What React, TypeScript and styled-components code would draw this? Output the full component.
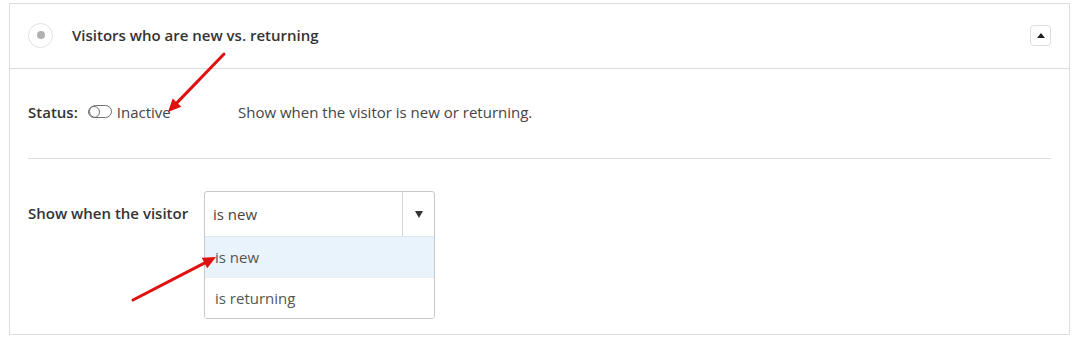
import React from 'react';
import styled, { createGlobalStyle } from 'styled-components';

const GlobalStyle = createGlobalStyle`
  html, body {
    margin: 0;
    padding: 0;
    background: #fff;
  }
  body {
    font-family: "Open Sans", "Liberation Sans", Arial, sans-serif;
    font-size: 15px;
    color: #333;
  }
`;

const Page = styled.div`
  position: relative;
  width: 1076px;
  height: 339px;
  padding: 3px 6px 0 9px;
  box-sizing: border-box;
`;

const Card = styled.section`
  border: 1px solid #dcdcdc;
  height: 332px;
  box-sizing: border-box;
  display: flex;
  flex-direction: column;
`;

const Header = styled.header`
  height: 65px;
  box-sizing: border-box;
  border-bottom: 1px solid #dcdcdc;
  display: flex;
  align-items: center;
  padding: 0 18px 2px;
`;

const Radio = styled.span`
  width: 25px;
  height: 25px;
  border: 1px solid #e2e2e2;
  border-radius: 50%;
  box-sizing: border-box;
  display: flex;
  align-items: center;
  justify-content: center;
  margin-right: 19px;
  &::after {
    content: '';
    width: 8px;
    height: 8px;
    border-radius: 50%;
    background: #b0b0b0;
  }
`;

const Title = styled.h2`
  margin: 0;
  flex: 1;
  font-size: 15px;
  font-weight: 600;
  color: #333;
`;

const CollapseButton = styled.button`
  width: 21px;
  height: 21px;
  padding: 0;
  border: 1px solid #dedede;
  border-radius: 4px;
  background: #fff;
  display: flex;
  align-items: center;
  justify-content: center;
  &::after {
    content: '';
    border-left: 4px solid transparent;
    border-right: 4px solid transparent;
    border-bottom: 5px solid #222;
  }
`;

const Body = styled.div`
  padding: 0 18px;
`;

const StatusRow = styled.div`
  height: 90px;
  box-sizing: border-box;
  display: flex;
  align-items: center;
  padding-bottom: 4px;
  border-bottom: 1px solid #dcdcdc;
`;

const StatusGroup = styled.div`
  width: 210px;
  display: flex;
  align-items: center;
`;

const Label = styled.span`
  font-weight: 600;
  color: #333;
`;

const Toggle = styled.span`
  width: 23px;
  height: 13px;
  border: 1.5px solid #707070;
  border-radius: 7px;
  box-sizing: border-box;
  margin: 0 5px 0 11px;
  display: flex;
  align-items: center;
  &::before {
    content: '';
    width: 12px;
    height: 12px;
    border: 1.5px solid #707070;
    border-radius: 50%;
    box-sizing: border-box;
    margin-left: -1.5px;
  }
`;

const StatusText = styled.span`
  color: #444;
`;

const Description = styled.span`
  color: #444;
`;

const ConditionRow = styled.div`
  display: flex;
  align-items: flex-start;
  padding-top: 32px;
`;

const ConditionLabel = styled(Label)`
  width: 176px;
  line-height: 44px;
`;

const Select = styled.div`
  width: 231px;
  box-sizing: border-box;
  border: 1px solid #c8c8c8;
  border-radius: 3px;
  background: #fff;
  color: #444;
  overflow: hidden;
`;

const SelectHead = styled.div`
  height: 44px;
  display: flex;
  align-items: center;
`;

const SelectValue = styled.span`
  flex: 1;
  padding-left: 8px;
`;

const SelectArrow = styled.span`
  width: 32px;
  height: 100%;
  box-sizing: border-box;
  border-left: 1px solid #d6d6d6;
  display: flex;
  align-items: center;
  justify-content: center;
  &::after {
    content: '';
    border-left: 4px solid transparent;
    border-right: 4px solid transparent;
    border-top: 7px solid #333;
  }
`;

const Option = styled.div<{ $active?: boolean }>`
  height: 40px;
  display: flex;
  align-items: center;
  padding-left: 10px;
  background: ${(p) => (p.$active ? '#e8f3fc' : '#fff')};
  border-top: ${(p) => (p.$active ? '1px solid #dde9f3' : '1px solid #eee')};
  color: #555;
`;

const Annotations = styled.svg`
  position: absolute;
  left: 0;
  top: 0;
  pointer-events: none;
`;

const Arrow = ({ x1, y1, x2, y2 }: { x1: number; y1: number; x2: number; y2: number }) => {
  const a = Math.atan2(y2 - y1, x2 - x1);
  const len = 13;
  const w = 6;
  const bx = x2 - Math.cos(a) * len;
  const by = y2 - Math.sin(a) * len;
  const px = -Math.sin(a) * w;
  const py = Math.cos(a) * w;
  return (
    <g>
      <line x1={x1} y1={y1} x2={bx + Math.cos(a) * 2} y2={by + Math.sin(a) * 2} stroke="#e01010" strokeWidth={3} strokeLinecap="round" />
      <polygon points={`${x2},${y2} ${bx + px},${by + py} ${bx - px},${by - py}`} fill="#e01010" />
    </g>
  );
};

export default function App() {
  return (
    <>
      <GlobalStyle />
      <Page>
        <Card>
          <Header>
            <Radio />
            <Title>Visitors who are new vs. returning</Title>
            <CollapseButton aria-label="Collapse" />
          </Header>
          <Body>
            <StatusRow>
              <StatusGroup>
                <Label>Status:</Label>
                <Toggle />
                <StatusText>Inactive</StatusText>
              </StatusGroup>
              <Description>Show when the visitor is new or returning.</Description>
            </StatusRow>
            <ConditionRow>
              <ConditionLabel>Show when the visitor</ConditionLabel>
              <Select>
                <SelectHead>
                  <SelectValue>is new</SelectValue>
                  <SelectArrow />
                </SelectHead>
                <Option $active>is new</Option>
                <Option>is returning</Option>
              </Select>
            </ConditionRow>
          </Body>
        </Card>
        <Annotations width="1076" height="339">
          <Arrow x1={224} y1={54} x2={168} y2={112} />
          <Arrow x1={133} y1={300} x2={216} y2={257} />
        </Annotations>
      </Page>
    </>
  );
}
